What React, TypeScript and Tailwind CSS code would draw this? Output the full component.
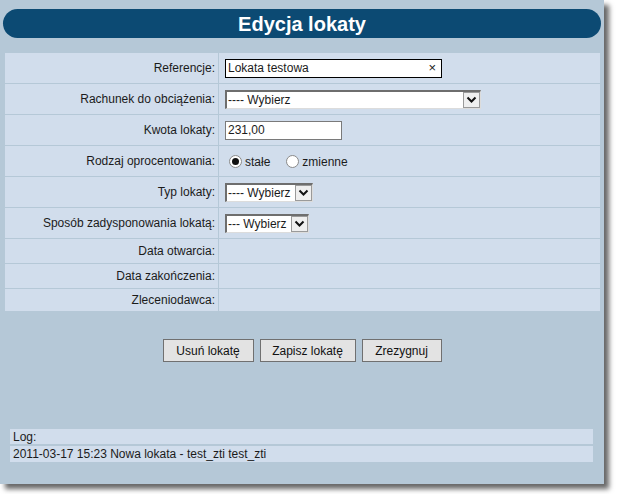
import React from 'react';

const Chevron: React.FC = () => (
  <div className="flex h-full w-[17px] shrink-0 items-center justify-center border border-[#9a9a9a] bg-[#efefef]">
    <svg width="11" height="8" viewBox="0 0 11 8">
      <path d="M1.5 1.5 L5.5 5.5 L9.5 1.5" fill="none" stroke="#111" strokeWidth="2" />
    </svg>
  </div>
);

const FakeSelect: React.FC<{ className: string; text: string }> = ({ className, text }) => (
  <div className={`flex h-[19px] items-stretch border-t-2 border-l-2 border-t-[#6e6e6e] border-l-[#6e6e6e] border-r border-b border-r-[#dcdcdc] border-b-[#dcdcdc] bg-white ${className}`}>
    <span className="flex-1 overflow-hidden whitespace-nowrap pl-[1px] leading-[16px]">{text}</span>
    <Chevron />
  </div>
);

const Radio: React.FC<{ checked?: boolean; label: string }> = ({ checked, label }) => (
  <label className="flex items-center gap-[3px]">
    <span className="flex h-[13px] w-[13px] items-center justify-center rounded-full border border-[#8a8a8a] bg-white">
      {checked && <span className="h-[7px] w-[7px] rounded-full bg-[#111]" />}
    </span>
    <span className="mt-[2px]">{label}</span>
  </label>
);

const rows: { label: string; h: string; value?: React.ReactNode }[] = [
  {
    label: 'Referencje:',
    h: 'h-[30px]',
    value: (
      <div className="flex h-[19px] w-[217px] items-center justify-between border border-black bg-white pl-[2px] pr-[5px]">
        <span>Lokata testowa</span>
        <span className="text-[13px]">×</span>
      </div>
    ),
  },
  { label: 'Rachunek do obciążenia:', h: 'h-[30px]', value: <FakeSelect className="w-[256px]" text="---- Wybierz" /> },
  {
    label: 'Kwota lokaty:',
    h: 'h-[30px]',
    value: (
      <div className="flex h-[19px] w-[117px] items-center border border-[#7a7a7a] bg-white pl-[2px]">231,00</div>
    ),
  },
  {
    label: 'Rodzaj oprocentowania:',
    h: 'h-[30px]',
    value: (
      <div className="flex items-center gap-[16px] pl-[4px]">
        <Radio checked label="stałe" />
        <Radio label="zmienne" />
      </div>
    ),
  },
  { label: 'Typ lokaty:', h: 'h-[30px]', value: <FakeSelect className="w-[88px]" text="---- Wybierz" /> },
  { label: 'Sposób zadysponowania lokatą:', h: 'h-[30px]', value: <FakeSelect className="w-[84px]" text="--- Wybierz" /> },
  { label: 'Data otwarcia:', h: 'h-[24px]' },
  { label: 'Data zakończenia:', h: 'h-[24px]' },
  { label: 'Zleceniodawca:', h: 'h-[22px]' },
];

const Btn: React.FC<{ className: string; children: React.ReactNode }> = ({ className, children }) => (
  <button className={`h-[23px] border border-[#707070] bg-[#e3e3e3] text-[12px] text-[#111] ${className}`}>{children}</button>
);

export default function App() {
  return (
    <div className="min-h-screen bg-white font-['Liberation_Sans',Arial,sans-serif] text-[12px] text-[#1b1b1b]">
      <div className="flex h-[484px] w-[604px] flex-col bg-[#b5c8d7] shadow-[5px_5px_5px_rgba(0,0,0,0.6)]">
        <div className="mx-[3px] mt-[9px] flex h-[29px] items-center justify-center rounded-full bg-[#0c4a73]">
          <span className="text-[20px] font-bold text-white">Edycja lokaty</span>
        </div>

        <div className="ml-[5px] mr-[4px] mt-[15px] grid grid-cols-[213px_1fr] gap-px bg-[#b5c8d7]">
          {rows.map(r => (
            <React.Fragment key={r.label}>
              <div className={`flex items-center justify-end bg-[#d1ddec] pr-[3px] ${r.h}`}>{r.label}</div>
              <div className={`flex items-center bg-[#d1ddec] pl-[6px] ${r.h}`}>{r.value}</div>
            </React.Fragment>
          ))}
        </div>

        <div className="mt-[28px] flex justify-center gap-[6px]">
          <Btn className="w-[91px]">Usuń lokatę</Btn>
          <Btn className="w-[96px]">Zapisz lokatę</Btn>
          <Btn className="w-[80px]">Zrezygnuj</Btn>
        </div>

        <div className="ml-[10px] mr-[11px] mt-[67px] flex flex-col gap-[2px]">
          <div className="flex h-[15px] items-center bg-[#d1ddec] pl-[3px]">Log:</div>
          <div className="flex h-[16px] items-center bg-[#d1ddec] pl-[3px]">2011-03-17 15:23 Nowa lokata - test_zti test_zti</div>
        </div>
      </div>
    </div>
  );
}
